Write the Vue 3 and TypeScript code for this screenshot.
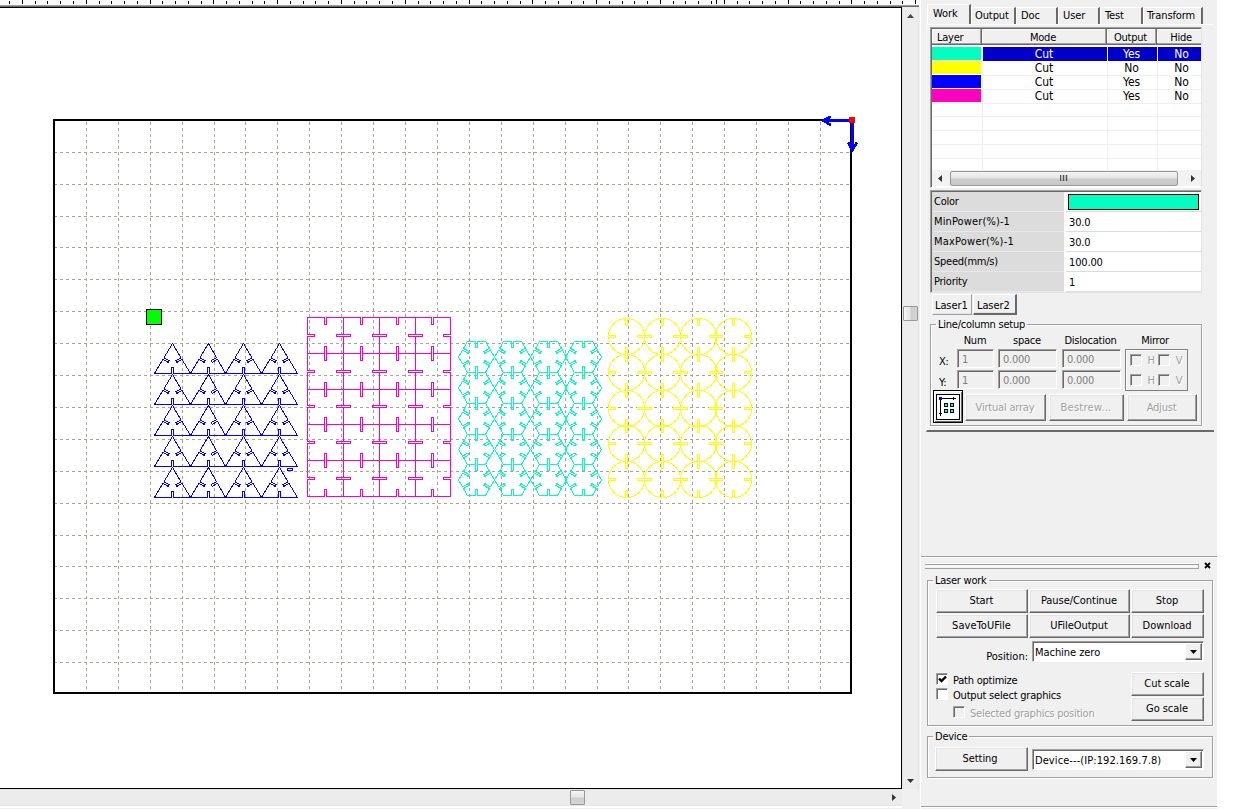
<script setup lang="ts">
interface Layer { color: string; mode: string; output: string; hide: string; selected?: boolean }
interface Tick { x: number; major: boolean }

const layers: Layer[] = [
  { color: '#00ffc0', mode: 'Cut', output: 'Yes', hide: 'No', selected: true },
  { color: '#ffff00', mode: 'Cut', output: 'No', hide: 'No' },
  { color: '#0000ff', mode: 'Cut', output: 'Yes', hide: 'No' },
  { color: '#ff00c0', mode: 'Cut', output: 'Yes', hide: 'No' },
]
const emptyRows = 5
const tabs = ['Work', 'Output', 'Doc', 'User', 'Test', 'Transform']
const params = [
  { label: 'MinPower(%)-1', value: '30.0', wide: false },
  { label: 'MaxPower(%)-1', value: '30.0', wide: true },
  { label: 'Speed(mm/s)', value: '100.00', wide: false },
  { label: 'Priority', value: '1', wide: false },
]

const range = (n: number) => Array.from({ length: n }, (_, i) => i)
const snap = (v: number) => Math.floor(v) + 0.5

const ticks: Tick[] = range(72).map((i) => ({ x: snap(9.7 + i * 12.76), major: i % 5 === 1 }))
const gridX = range(24).map((i) => snap(54.4 + 31.92 * (i + 1)))
const gridY = range(17).map((i) => snap(120.35 + 31.9 * (i + 1)))

type Pt = [number, number]

/* Closed polygon with a narrow slot cut inward at the middle of each edge. */
function slotted(points: Pt[], depth: number, bias = 0.01, half = 1): string {
  const out: string[] = []
  points.forEach((a, i) => {
    const b = points[(i + 1) % points.length]
    out.push(`${a[0]},${a[1]}`)
    const len = Math.hypot(b[0] - a[0], b[1] - a[1])
    const ux = (b[0] - a[0]) / len
    const uy = (b[1] - a[1]) / len
    let mx = (a[0] + b[0]) / 2
    let my = (a[1] + b[1]) / 2
    if (Math.abs(uy) < 0.01) mx = snap(mx - bias)
    if (Math.abs(ux) < 0.01) my = snap(my - bias)
    const nx = -uy * depth
    const ny = ux * depth
    out.push(`${mx - ux * half},${my - uy * half}`)
    out.push(`${mx - ux * half + nx},${my - uy * half + ny}`)
    out.push(`${mx + ux * half + nx},${my + uy * half + ny}`)
    out.push(`${mx + ux * half},${my + uy * half}`)
  })
  return `M${out.join('L')}Z`
}

const cells = range(5).flatMap((r) => range(4).map((c) => ({ r, c })))

const triangles = cells.map(({ r, c }) => {
  const l = snap(154.4 + c * 35.7)
  const rt = snap(154.4 + (c + 1) * 35.7)
  const base = snap(373.2 + r * 31)
  const mid = snap((l + rt) / 2)
  return slotted([[mid, base - 30], [rt, base], [l, base]], 6, 0)
}).join('')

const squares = cells.map(({ r, c }) => {
  const l = snap(307.5 + c * 35.85)
  const rt = snap(307.5 + (c + 1) * 35.85)
  const t = snap(317.5 + r * 35.8)
  const b = snap(317.5 + (r + 1) * 35.8)
  return slotted([[l, t], [rt, t], [rt, b], [l, b]], 7)
}).join('')

const hexagons = cells.map(({ r, c }) => {
  const cx = snap(476.6 + c * 35.7)
  const t = snap(341.3 + r * 30.9)
  const b = snap(341.3 + (r + 1) * 30.9)
  const m = (t + b) / 2
  return slotted([[cx - 9, t], [cx + 9, t], [cx + 17.9, m], [cx + 9, b], [cx - 9, b], [cx - 17.9, m]], 6.4)
}).join('')

const circles = cells.map(({ r, c }) => {
  const x = snap(626.6 + c * 35.7)
  const y = snap(336.4 + r * 35.8)
  const R = 18
  const d = R - 7
  const arc = (px: number, py: number) => `A${R} ${R} 0 0 1 ${x + px} ${y + py}`
  return `M${x + 1} ${y - R}${arc(R, -1)}H${x + d}V${y + 1}H${x + R}${arc(1, R)}V${y + d}H${x - 1}V${y + R}`
    + `${arc(-R, 1)}H${x - d}V${y - 1}H${x - R}${arc(-1, -R)}V${y - d}H${x + 1}Z`
}).join('')
</script>

<template>
  <div class="app">
    <main class="workspace">
      <svg class="ruler" width="920" height="7">
        <rect width="920" height="5" fill="#fafafa" />
        <rect v-for="t in ticks" :key="t.x" :x="t.x - 0.5" :y="t.major ? 0 : 1" width="1" :height="t.major ? 4 : 3" fill="#000" />
        <rect x="716" y="0" width="1" height="4" fill="#000" />
        <rect y="5" width="919" height="1" fill="#a0a0a0" />
        <rect y="6" width="919" height="1" fill="#696969" />
      </svg>
      <div class="stage">
        <svg class="canvas" width="902" height="782" viewBox="0 7 902 782" shape-rendering="crispEdges" fill="none">
          <rect x="0" y="7" width="902" height="782" fill="#fff" />
          <path d="M0 7.5H901.5V788.5H0" stroke="#000" />
          <g stroke="#a8a595" stroke-dasharray="3 3">
            <path v-for="x in gridX" :key="x" :d="`M${x} 122V692`" />
            <path v-for="y in gridY" :key="y" :d="`M54 ${y}H850`" />
          </g>
          <rect x="54" y="120" width="797" height="573" stroke="#000" stroke-width="2" />
          <path :d="triangles" stroke="#0000ff" />
          <path d="M287.5 468.5h5v2h-5z" stroke="#0000ff" />
          <path :d="squares" stroke="#ff00c0" />
          <path :d="hexagons" stroke="#00ffc0" />
          <path :d="circles" stroke="#ffff00" />
          <rect x="146.500" y="309.500" width="15" height="15" fill="#00ff00" stroke="#000" />
          <g stroke="#0000ff" stroke-width="2.600">
            <path d="M850 120.500H823M831 116.500L823 120.500L831 125" />
            <path d="M852.500 122V150M848 142.500L852.500 150L857 142.500" />
          </g>
          <rect x="849" y="117" width="6" height="6" fill="#ff0000" />
        </svg>
        <div class="vscroll">
          <svg width="7" height="4"><path d="M0 4L3.500 0L7 4z" fill="#444" /></svg>
          <i class="vthumb"></i>
          <svg width="7" height="4"><path d="M0 0L3.500 4L7 0z" fill="#333" /></svg>
        </div>
      </div>
      <div class="hscroll">
        <i class="hthumb"></i>
        <svg width="4" height="7"><path d="M0 0L4 3.500L0 7z" fill="#333" /></svg>
      </div>
    </main>

    <aside class="panel">
      <nav class="tabs">
        <span v-for="(t, i) in tabs" :key="t" class="tab" :class="[`tab${i}`, { active: i === 0 }]">{{ t }}</span>
      </nav>
      <section class="page">
        <div class="layers">
          <div class="lrow head"><b>Layer</b><b>Mode</b><b>Output</b><b>Hide</b></div>
          <div v-for="l in layers" :key="l.color" class="lrow" :class="{ selected: l.selected }">
            <span><i :style="{ background: l.color }"></i></span><span>{{ l.mode }}</span><span>{{ l.output }}</span><span>{{ l.hide }}</span>
          </div>
          <div v-for="n in emptyRows" :key="n" class="lrow"><span></span><span></span><span></span><span></span></div>
          <div class="tscroll">
            <svg width="4" height="7"><path d="M4 0L0 3.500L4 7z" fill="#333" /></svg>
            <i class="tthumb"><svg width="9" height="7"><path d="M.5 0V6M3.500 0V6M6.500 0V6" stroke="#555" stroke-width="1.500" /></svg></i>
            <svg width="4" height="7"><path d="M0 0L4 3.500L0 7z" fill="#333" /></svg>
          </div>
        </div>

        <div class="params">
          <div class="prow"><span>Color</span><em><i></i></em></div>
          <div v-for="p in params" :key="p.label" class="prow" :class="{ wide: p.wide }"><span>{{ p.label }}</span><em>{{ p.value }}</em></div>
        </div>

        <div class="lasers"><span class="laser">Laser1</span><span class="laser second">Laser2</span></div>

        <fieldset class="group array">
          <legend>Line/column setup</legend>
          <div class="heads"><span>Num</span><span>space</span><span>Dislocation</span><span>Mirror</span></div>
          <div class="setup">
            <div class="fields">
              <label>X:</label><span class="field">1</span><span class="field">0.000</span><span class="field">0.000</span>
              <label>Y:</label><span class="field">1</span><span class="field">0.000</span><span class="field">0.000</span>
            </div>
            <div class="mirror">
              <div v-for="n in 2" :key="n"><i class="check off"></i><span>H</span><i class="check off"></i><span>V</span></div>
            </div>
          </div>
          <div class="actions">
            <span class="origin">
              <svg width="24" height="26" shape-rendering="crispEdges">
                <rect x=".5" y=".5" width="23" height="25" fill="#fff" stroke="#000" />
                <path d="M4.500 4V22M3 19.500h3M4 4.500H20M17.500 3v3" stroke="#000" fill="none" />
                <rect x="3" y="3" width="3" height="3" fill="#00f" />
                <g fill="#0ff" stroke="#000">
                  <rect x="8.500" y="9.500" width="3" height="3" /><rect x="14.500" y="9.500" width="3" height="3" />
                  <rect x="8.500" y="15.500" width="3" height="3" /><rect x="14.500" y="15.500" width="3" height="3" />
                </g>
              </svg>
            </span>
            <button class="btn dim">Virtual array</button>
            <button class="btn dim">Bestrew...</button>
            <button class="btn dim">Adjust</button>
          </div>
        </fieldset>
      </section>

      <section class="dock">
        <div class="grip">
          <i></i>
          <svg width="7" height="7"><path d="M1 1L6 6M6 1L1 6" stroke="#000" stroke-width="1.800" /></svg>
        </div>
        <fieldset class="group work">
          <legend>Laser work</legend>
          <div class="buttons">
            <button class="btn">Start</button><button class="btn">Pause/Continue</button><button class="btn">Stop</button>
            <button class="btn save">SaveToUFile</button><button class="btn">UFileOutput</button><button class="btn">Download</button>
          </div>
          <div class="position">
            <label>Position:</label>
            <div class="combo"><span>Machine zero</span><i><svg width="7" height="4"><path d="M0 0H7L3.500 4z" /></svg></i></div>
          </div>
          <div class="options">
            <div class="checks">
              <div class="opt"><i class="check"><svg width="9" height="9"><path d="M1 3.500L3.500 6L8 1.500" stroke="#000" stroke-width="2.400" fill="none" /></svg></i>Path optimize</div>
              <div class="opt select"><i class="check"></i>Output select graphics</div>
              <div class="opt nested"><i class="check off"></i>Selected graphics position</div>
            </div>
            <div class="scales"><button class="btn">Cut scale</button><button class="btn">Go scale</button></div>
          </div>
        </fieldset>
        <fieldset class="group device">
          <legend>Device</legend>
          <div class="devrow">
            <button class="btn">Setting</button>
            <div class="combo"><span class="ip">Device---(IP:192.169.7.8)</span><i><svg width="7" height="4"><path d="M0 0H7L3.500 4z" /></svg></i></div>
          </div>
        </fieldset>
      </section>
    </aside>
  </div>
</template>

<style>
body { background: #fff; overflow: hidden; }
</style>

<style scoped>
* { box-sizing: border-box; }
.app { display: flex; width: 1245px; height: 809px; font: 11px/13px "DejaVu Sans Condensed", "DejaVu Sans", "Noto Sans", sans-serif; font-stretch: condensed; letter-spacing: -0.24px; color: #000; }
svg { display: block; flex: none; }
i, em { font-style: normal; }
b { font-weight: normal; }
span, label, button, legend { white-space: nowrap; }

.workspace { width: 921px; background: #f0f0f0; border-right: 1px solid #fff; display: flex; flex-direction: column; }
.stage { display: flex; }
.vscroll { width: 17px; background: #ededed; border-left: 1px solid #e3e3e3; border-right: 1px solid #e6e6e6; display: flex; flex-direction: column; align-items: center; padding: 7px 0 6px; justify-content: space-between; }
.vthumb { width: 15px; height: 15px; margin-bottom: 170px; border: 1px solid #989898; border-radius: 1px; background: linear-gradient(90deg, #f5f5f5, #e6e6e6 45%, #cfcfcf 55%, #d4d4d4); }
.hscroll { height: 17px; width: 902px; background: #ececec; border-top: 1px solid #e3e3e3; border-bottom: 1px solid #e6e6e6; box-shadow: 0 2px 0 #fff; display: flex; align-items: center; justify-content: space-between; padding: 0 6px 0 570px; }
.hthumb { width: 15px; height: 15px; border: 1px solid #989898; border-radius: 1px; background: linear-gradient(#f5f5f5, #e6e6e6 45%, #cfcfcf 55%, #d4d4d4); }

.panel { width: 296px; background: #f0f0f0; display: flex; flex-direction: column; }
.tabs { display: flex; align-items: flex-end; height: 24px; padding-left: 6px; }
.tab { height: 17px; padding: 1px 0 0 3px; border-right: 2px solid #696969; border-left: 1px solid #fff; border-top: 1px solid #fff; letter-spacing: -0.1px; }
.tab.active { width: 44px; height: 20px; padding: 2px 0 0 5px; }
.tab1 { width: 45px; }
.tab2 { width: 42px; padding-left: 4px; }
.tab3 { width: 42px; padding-left: 4px; }
.tab4 { width: 43px; padding-left: 4px; }
.tab5 { width: 60px; }
.page { width: 288px; height: 408px; margin-left: 5px; padding: 2px 11px 0 3px; border-left: 1px solid #fafafa; border-top: 1px solid #fafafa; border-bottom: 2px solid #696969; display: flex; flex-direction: column; }

.layers { width: 272px; height: 161px; flex: none; background: #fff; border: 1px solid #a0a0a0; border-right-color: #e3e3e3; border-bottom-color: #fff; box-shadow: inset 1px 1px 0 #696969; padding: 1px 0 0 1px; display: flex; flex-direction: column; }
.lrow { display: grid; grid-template-columns: 51px 125px 50px 43px; height: 14px; flex: none; }
.lrow span { border-right: 1px solid #efefef; border-bottom: 1px solid #efefef; text-align: center; font-size: 12px; line-height: 14px; letter-spacing: -0.1px; padding-right: 2px; }
.lrow span i { display: block; width: 49px; height: 13px; }
.lrow span:last-child { border-right: 0; padding: 0 0 0 4px; }
.lrow.head { height: 16px; margin-bottom: 2px; background: #f0f0f0; }
.head b { border-right: 1px solid #696969; border-bottom: 1px solid #696969; box-shadow: inset -1px -1px 0 #a0a0a0, inset 1px 1px 0 #fff; text-align: center; line-height: 15px; padding: 1px 2px 0 0; height: 16px; margin: 0 1px 0 -1px; }
.head b:first-child { text-align: left; padding-left: 5px; margin: 0 1px 0 0; }
.head b:last-child { border-right: 0; box-shadow: inset 0 -1px 0 #a0a0a0, inset 1px 1px 0 #fff; padding: 1px 0 0 4px; margin-right: 0; }
.selected span { color: #fff; }
.selected span + span { background: #0000c8; border-color: #fff; }
.tscroll { height: 16px; margin-top: -3px; flex: none; position: relative; background: #f2f2f2; display: flex; align-items: center; justify-content: space-between; padding: 0 6px; }
.tthumb { width: 228px; height: 15px; margin: 0 auto 0 8px; border: 1px solid #979797; border-radius: 2px; background: linear-gradient(#f3f3f3, #e6e6e6 45%, #cdcdcd 55%, #c8c8c8); display: flex; align-items: center; justify-content: center; }

.params { width: 272px; height: 103px; margin-top: 2px; flex: none; background: #fff; border: 1px solid #a0a0a0; border-right-color: #e3e3e3; border-bottom-color: #e3e3e3; box-shadow: inset 1px 1px 0 #696969; padding: 1px 0 0 1px; }
.prow { display: flex; height: 20px; }
.prow span { width: 132px; height: 20px; background: #dcdcdc; border-bottom: 1px solid #e8e8e8; padding: 3px 0 0 2px; }
.prow:nth-child(2) span { letter-spacing: 0.12px; }
.prow.wide span { letter-spacing: 0.2px; }
.prow em { flex: 1; margin-left: 2px; border-bottom: 1px solid #dcdcdc; padding: 4px 0 0 3px; letter-spacing: -0.15px; }
.prow em i { display: block; width: 131px; height: 16px; margin: -2px 0 0 -1px; background: #00ffc0; border: 1px solid #000; }

.lasers { display: flex; gap: 1px; margin: 1px 0 0 2px; }
.laser { width: 40px; height: 21px; padding: 4px 0 0 2px; letter-spacing: -0.1px; border: 1px solid #fff; border-right-color: #a0a0a0; border-bottom: 1px solid #a0a0a0; box-shadow: inset 0 -1px 0 #e3e3e3; }
.laser.second { width: 44px; border-right: 2px solid #696969; border-bottom: 2px solid #696969; padding-left: 3px; }

.group { margin: 0; padding: 0; border: 1px solid #a0a0a0; min-width: 0; box-shadow: 1px 1px 0 #fff, inset 1px 1px 0 #fff; }
.group legend { padding: 0 2px; margin-left: 5px; height: 13px; }
.array { width: 272px; height: 108px; margin-top: 3px; flex: none; }
.array legend { letter-spacing: -0.25px; }
.heads { display: grid; grid-template-columns: 38px 66px 61px 68px; padding: 3px 0 0 25px; text-align: center; height: 18px; }
.setup { display: flex; padding-left: 8px; height: 41px; }
.fields { display: grid; grid-template-columns: 18px 41px 64px 60px; grid-auto-rows: 19px; row-gap: 2px; width: 183px; }
.fields label { padding-top: 6px; }
.field { width: 59px; height: 19px; padding: 3px 0 0 4px; color: #808080; border: 1px solid #a0a0a0; border-right-color: #fff; border-bottom-color: #fff; box-shadow: inset 1px 1px 0 #696969; }
label + .field { width: 37px; }
.mirror { width: 63px; height: 42px; margin-left: 3px; border: 1px solid #808080; box-shadow: inset 1px 1px 0 #fff; padding: 1px 0 0 4px; color: #a0a0a0; text-shadow: 1px 1px 0 #fff; }
.mirror div { display: flex; align-items: center; height: 18px; margin-bottom: 2px; }
.mirror span { width: 16px; text-align: center; padding: 1px 0 0 2px; }
.check { display: flex; align-items: center; justify-content: center; width: 12px; height: 12px; flex: none; background: #fff; border: 1px solid #a0a0a0; border-right-color: #fff; border-bottom-color: #fff; box-shadow: inset 1px 1px 0 #696969; }
.check.off { background: #f0f0f0; }
.actions { display: flex; align-items: center; padding-left: 2px; }
.origin { width: 30px; height: 33px; border: 1px solid #000; background: #f0f0f0; box-shadow: inset 1px 1px 0 #fff, inset -1px -1px 0 #696969; display: flex; align-items: center; justify-content: center; margin-right: 2px; }
.btn { font: inherit; letter-spacing: -0.05px; color: #000; background: #f0f0f0; padding: 0 1px 1px 0; margin: 0; text-align: center; height: 24px; border: 1px solid #fff; border-right-color: #696969; border-bottom-color: #696969; border-radius: 0; box-shadow: inset -1px -1px 0 #a0a0a0, inset 1px 1px 0 #e3e3e3; }
.save { letter-spacing: 0.05px; }
.dim { color: #a0a0a0; text-shadow: 1px 1px 0 #fff; height: 27px; padding-bottom: 0; letter-spacing: -0.2px; }
.actions .btn { margin-top: 2px; }
.actions .btn:nth-child(2) { width: 81px; }
.actions .btn:nth-child(3) { width: 75px; margin: 2px 3px 0; letter-spacing: 0.25px; }
.actions .btn:nth-child(4) { width: 70px; }

.dock { margin-top: 124px; height: 251px; border-top: 1px solid #a0a0a0; border-bottom: 1px solid #a0a0a0; box-shadow: inset 0 1px 0 #fff, 0 1px 0 #fff; padding: 6px 4px 0; }
.grip { display: flex; align-items: center; justify-content: space-between; height: 6px; padding-right: 2px; }
.grip svg { margin-top: -2px; }
.grip i { width: 274px; height: 6px; border-top: 1px solid #fff; border-bottom: 1px solid #a0a0a0; border-right: 1px solid #a0a0a0; background: linear-gradient(#a0a0a0 1px, #f0f0f0 1px 2px, #fff 2px 3px, #f0f0f0 3px); }
.work { margin: 5px 0 0 2px; width: 286px; height: 152px; padding: 0 8px; }
.work legend { margin-left: -3px; }
.buttons { display: grid; grid-template-columns: 92px 101px 73px; gap: 1px; margin-top: 2px; }
.position { display: flex; margin-top: 3px; height: 21px; }
.position label { width: 92px; text-align: right; padding-top: 9px; margin-right: 4px; letter-spacing: 0; }
.combo { width: 172px; height: 21px; flex: none; background: #fff; border: 1px solid #a0a0a0; border-right-color: #fff; border-bottom-color: #fff; box-shadow: inset 1px 1px 0 #696969; padding: 1px; display: flex; justify-content: space-between; }
.combo span { padding: 3px 0 0 1px; letter-spacing: -0.05px; }
.combo .ip { letter-spacing: 0.08px; }
.combo i { width: 17px; background: #f0f0f0; border: 1px solid #fff; border-right-color: #696969; border-bottom-color: #696969; box-shadow: inset -1px -1px 0 #a0a0a0; display: flex; align-items: center; justify-content: center; }
.options { display: flex; justify-content: space-between; padding-top: 10px; }
.opt { display: flex; gap: 5px; height: 15px; line-height: 17px; }
.opt.select { letter-spacing: -0.2px; }
.opt .check { margin-top: 1px; }
.nested { padding-left: 17px; color: #a0a0a0; text-shadow: 1px 1px 0 #fff; margin-top: 3px; }
.scales { width: 73px; display: grid; gap: 1px; align-content: start; }
.device { margin: 4px 0 0 2px; width: 286px; height: 48px; padding: 0 8px 0 7px; }
.device legend { margin-left: -2px; }
.devrow { display: flex; justify-content: space-between; align-items: flex-start; padding-top: 4px; }
.devrow .btn { width: 93px; padding-right: 3px; }
.devrow .combo { margin-top: 2px; }
</style>
